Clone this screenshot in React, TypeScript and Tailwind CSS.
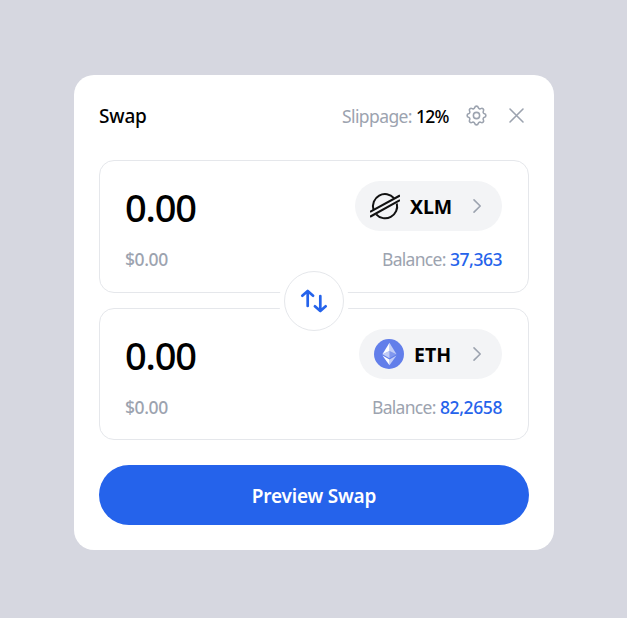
import React from "react";
import { TbSettings } from "react-icons/tb";

function StellarLogo() {
  return (
    <svg width="30" height="30" viewBox="0 0 30 30" fill="none" stroke="#111" strokeWidth="2">
      <path d="M3.5 18.6A12 12 0 0 1 24 7.2" />
      <path d="M26.8 12.4A12 12 0 0 1 6.2 23.3" />
      <path d="M0 20.9 30 4.5M0 25.7 30 9.1" strokeWidth="2.2" />
    </svg>
  );
}

function EthereumLogo() {
  return (
    <svg width="30" height="30" viewBox="0 0 32 32">
      <circle cx="16" cy="16" r="16" fill="#627eea" />
      <g fill="#fff">
        <path fillOpacity=".602" d="M16.5 4v8.87l7.5 3.35z" />
        <path d="M16.5 4 9 16.22l7.5-3.35z" />
        <path fillOpacity=".602" d="M16.5 21.97v6.03L24 17.62z" />
        <path d="M16.5 28v-6.03L9 17.62z" />
        <path fillOpacity=".2" d="m16.5 20.57 7.5-4.35-7.5-3.35z" />
        <path fillOpacity=".602" d="m9 16.22 7.5 4.35v-7.7z" />
      </g>
    </svg>
  );
}

interface TokenProps {
  symbol: string;
  balance: string;
  logo: React.ReactNode;
  symbolClass: string;
  balanceClass: string;
  boxClass: string;
}

function TokenBox({ symbol, balance, logo, symbolClass, balanceClass, boxClass }: TokenProps) {
  return (
    <section className={`rounded-[15px] border border-[#e5e7eb] pt-5 pr-[26px] pl-[25px] ${boxClass}`}>
      <div className="flex h-[50px] items-center justify-between">
        <span className="w-[72px] whitespace-nowrap pt-px text-[38px] leading-[50px] font-medium tracking-[-1.2px]">0.00</span>
        <button className="flex h-[50px] items-center rounded-full bg-[#f3f4f6] px-[15px]">
          {logo}
          <span className={`whitespace-nowrap pt-0.5 text-left text-[19.5px] font-bold ${symbolClass}`}>{symbol}</span>
          <svg className="ml-[15px]" width="20" height="20" viewBox="0 0 20 20" fill="none" stroke="#9ca3af" strokeWidth="1.6" strokeLinecap="round" strokeLinejoin="round">
            <path d="m7 3.9 6.2 6.1L7 16.1" />
          </svg>
        </button>
      </div>
      <div className="mt-[14px] flex h-7 items-center justify-between text-[17.5px] leading-7">
        <span className="font-medium tracking-[-0.4px] text-[#9ca3af]">$0.00</span>
        <span className="flex whitespace-nowrap text-[#9ca3af]">
          <span className="w-[68px] tracking-[-0.7px]">Balance: </span>
          <span className={`font-medium text-[#2563eb] ${balanceClass}`}>{balance}</span>
        </span>
      </div>
    </section>
  );
}

export default function App() {
  return (
    <main className="flex h-[618px] w-[627px] justify-center bg-[#d6d7e0] pt-[75px] pl-px font-['Noto_Sans',sans-serif] text-black">
      <div className="h-[475px] w-[480px] rounded-[20px] bg-white px-[25px]">
        <header className="flex h-[85px] items-center pb-1">
          <h1 className="pt-px text-[19px] font-medium tracking-[-0.2px]">Swap</h1>
          <div className="ml-auto flex items-center text-[17.5px]">
            <span className="w-[75px] whitespace-nowrap pt-0.5 tracking-[-0.6px] text-[#9ca3af]">Slippage:</span>
            <span className="-ml-px w-[33px] whitespace-nowrap pt-0.5 font-medium tracking-[-0.8px]">12%</span>
            <TbSettings className="ml-[15px] text-[#9ca3af]" size={25} strokeWidth={1.5} />
            <svg className="ml-[15px]" width="25" height="25" viewBox="0 0 25 25" fill="none" stroke="#9ca3af" strokeWidth="1.6" strokeLinecap="round">
              <path d="m6 6 13 13M19 6 6 19" />
            </svg>
          </div>
        </header>
        <div className="relative">
          <TokenBox symbol="XLM" balance="37,363" logo={<StellarLogo />} symbolClass="ml-[10px] w-[42px] tracking-[-0.1px]" balanceClass="w-[52px] tracking-[-0.45px]" boxClass="h-[133px]" />
          <TokenBox symbol="ETH" balance="82,2658" logo={<EthereumLogo />} symbolClass="ml-[10px] w-[38px] tracking-[0.1px]" balanceClass="w-[62px] tracking-[-0.4px]" boxClass="mt-[15px] h-[132px]" />
          <button className="absolute top-[106px] left-[180px] flex size-[70px] items-center justify-center rounded-full bg-white">
            <span className="flex size-[60px] items-center justify-center rounded-full border border-[#e5e7eb]">
              <svg width="30" height="30" viewBox="0 0 30 30" fill="none" stroke="#2563eb" strokeWidth="2.7" strokeLinecap="round" strokeLinejoin="round">
                <path d="M8.7 20V5M3.3 9.7 8.7 4.9l5.4 4.8M21.3 10v15M15.9 20.3l5.4 4.8 5.4-4.8" />
              </svg>
            </span>
          </button>
        </div>
        <button className="mt-[25px] h-[60px] w-full rounded-full bg-[#2563eb] pt-0.5 text-[19px] font-semibold tracking-[-0.2px] text-white">Preview Swap</button>
      </div>
    </main>
  );
}
